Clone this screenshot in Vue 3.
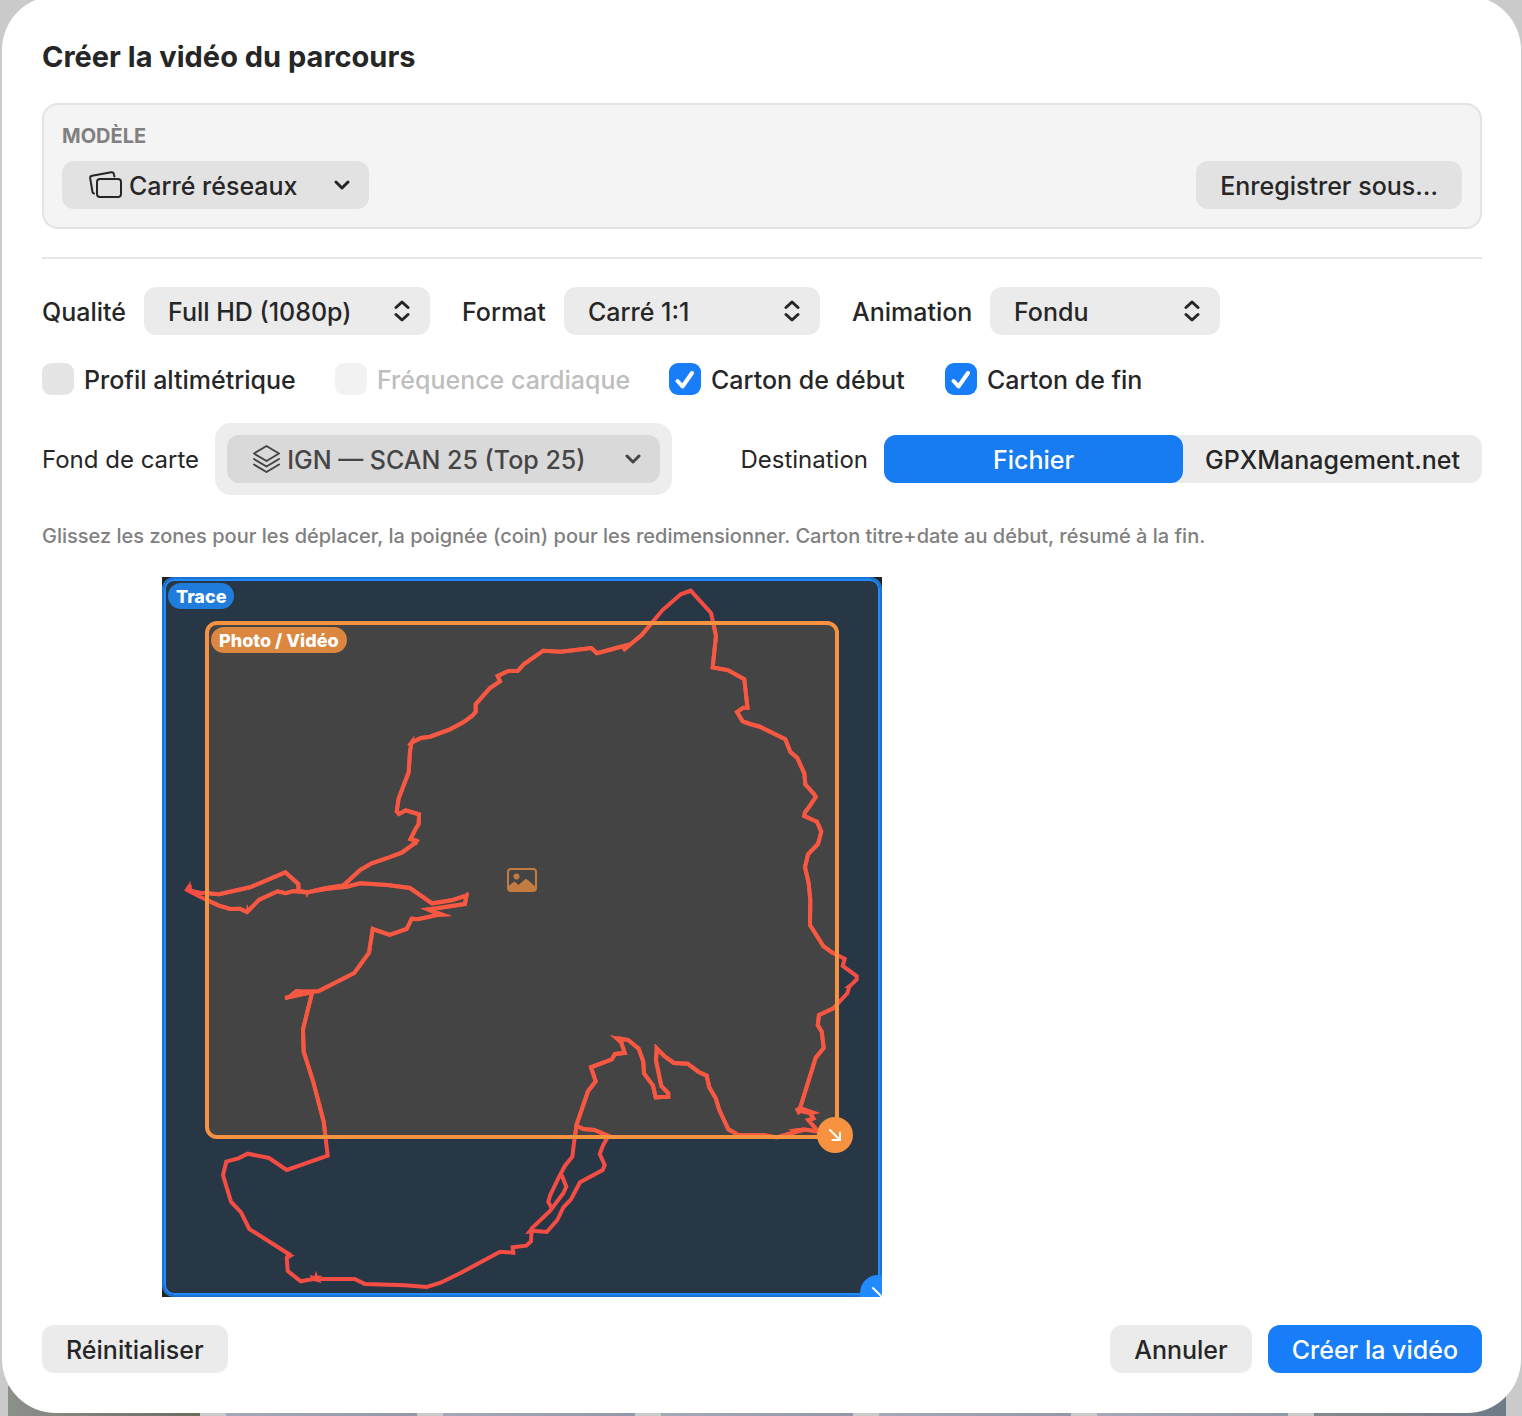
<script setup>
import { ref } from 'vue'

const model = ref('Carré réseaux')
const quality = ref('Full HD (1080p)')
const format = ref('Carré 1:1')
const animation = ref('Fondu')
const baseMap = ref('IGN — SCAN 25 (Top 25)')
const destination = ref('file')

const options = ref([
  { id: 'profile', label: 'Profil altimétrique', checked: false, disabled: false },
  { id: 'heart', label: 'Fréquence cardiaque', checked: false, disabled: true },
  { id: 'intro', label: 'Carton de début', checked: true, disabled: false },
  { id: 'outro', label: 'Carton de fin', checked: true, disabled: false },
])

const destinations = [
  { id: 'file', label: 'Fichier' },
  { id: 'site', label: 'GPXManagement.net' },
]
</script>

<template>
  <div class="backdrop">
    <div class="thumbs" aria-hidden="true">
      <span v-for="n in 7" :key="n" class="thumb"></span>
    </div>

    <main class="dialog" role="dialog" aria-labelledby="dialog-title">
      <h1 id="dialog-title">Créer la vidéo du parcours</h1>

      <section class="panel">
        <label class="caption" for="model">MODÈLE</label>
        <div class="panel-row">
          <div class="picker picker-model">
            <svg class="lead" width="34" height="28" viewBox="0 0 34 28" fill="none" stroke="#262626" stroke-width="2" stroke-linejoin="round" stroke-linecap="round">
              <rect x="8" y="8" width="24" height="18" rx="3" />
              <path d="M5 22.500C4.300 22.400 3.700 21.900 3.500 21L1.200 7.400C1 6 1.700 4.900 3.100 4.700L22.200 1.300C23.600 1.100 24.700 1.900 24.900 3.200L25.400 5.500" />
            </svg>
            <select id="model" v-model="model"><option>Carré réseaux</option></select>
            <svg class="chevron" width="16" height="10" viewBox="0 0 16 10"><path d="M2 2l6 6 6-6" /></svg>
          </div>
          <button type="button" class="button">Enregistrer sous…</button>
        </div>
      </section>

      <hr />

      <div class="fields">
        <div class="field">
          <label for="quality">Qualité</label>
          <div class="picker">
            <select id="quality" v-model="quality"><option>Full HD (1080p)</option></select>
            <svg class="updown" width="16" height="22" viewBox="0 0 16 22"><path d="M2 7.500l6-5.500 6 5.500M2 14.500l6 5.500 6-5.500" /></svg>
          </div>
        </div>
        <div class="field field-format">
          <label for="format">Format</label>
          <div class="picker">
            <select id="format" v-model="format"><option>Carré 1:1</option></select>
            <svg class="updown" width="16" height="22" viewBox="0 0 16 22"><path d="M2 7.500l6-5.500 6 5.500M2 14.500l6 5.500 6-5.500" /></svg>
          </div>
        </div>
        <div class="field field-animation">
          <label for="animation">Animation</label>
          <div class="picker">
            <select id="animation" v-model="animation"><option>Fondu</option></select>
            <svg class="updown" width="16" height="22" viewBox="0 0 16 22"><path d="M2 7.500l6-5.500 6 5.500M2 14.500l6 5.500 6-5.500" /></svg>
          </div>
        </div>
      </div>

      <div class="checks">
        <label v-for="o in options" :key="o.id" class="check" :class="{ disabled: o.disabled }">
          <span class="box">
            <input v-model="o.checked" type="checkbox" :disabled="o.disabled" />
            <svg v-if="o.checked" class="tick" width="32" height="32" viewBox="0 0 32 32"><path d="M8.500 18L13.500 23.500L23 10" /></svg>
          </span>
          <span class="check-text">{{ o.label }}</span>
        </label>
      </div>

      <div class="target">
        <div class="group">
          <label for="base-map">Fond de carte</label>
          <div class="halo">
            <div class="picker picker-map">
              <svg class="lead" width="28" height="28" viewBox="0 0 28 28" fill="none" stroke="#454545" stroke-width="2" stroke-linejoin="round" stroke-linecap="round">
                <path d="M13 1L25.500 8.500L13 16L.500 8.500Z" transform="translate(.5 0)" />
                <path d="M1 14L13.500 21.500L26 14M1 19.500L13.500 27L26 19.500" />
              </svg>
              <select id="base-map" v-model="baseMap"><option>IGN — SCAN 25 (Top 25)</option></select>
              <svg class="chevron" width="16" height="10" viewBox="0 0 16 10"><path d="M2 2l6 6 6-6" /></svg>
            </div>
          </div>
        </div>
        <div class="group">
          <span id="destination-label" class="group-label">Destination</span>
          <div class="segmented" role="group" aria-labelledby="destination-label">
            <button
              v-for="d in destinations"
              :key="d.id"
              type="button"
              :class="{ active: destination === d.id }"
              :aria-pressed="destination === d.id"
              @click="destination = d.id"
            >{{ d.label }}</button>
          </div>
        </div>
      </div>

      <p class="hint">Glissez les zones pour les déplacer, la poignée (coin) pour les redimensionner. Carton titre+date au début, résumé à la fin.</p>

      <div class="preview">
        <div class="canvas">
          <div class="fill fill-trace"></div>
          <div class="fill fill-photo"></div>
          <svg class="track" viewBox="162 577 720 720" fill="none" stroke-width="4">
            <defs>
              <clipPath id="over-photo"><rect x="207" y="623" width="630" height="514" /></clipPath>
              <g id="route">
                <path d="M690.700 590.700L680.700 594.300L662.300 610.300L641.700 635L632.300 642.700L623 650.500L630 644.500L620 647L597 653.300L591.300 648L561 651.700L543.300 650.700L524 664L517.700 671L508.300 671L497.700 676L500 681.300L490 688L475.700 704.300V711.700L472.300 715.700L463.300 722.300L450 729.300L430 736.700L421 738L413.300 741.700L409 746L411.300 743L410 751.700L408.700 772.300L398.700 798.300L396.700 811.300L399 814L405.700 810.300L419 814.300L418.700 824L415 830L410.500 839L416.500 841L415 843L401.700 852.700L388.300 857.700L371.700 863.300L360 870L343.300 885.500L325 888.300L307 892.500L298.500 890.700L298.300 884L285.300 872.300L250 887.300L219 894.300L200 892.700L188.300 890.300L190 885L187 890L200 896.700L218.300 905.300L230 909L240 908.700L247 912L259.300 899.700L277.700 891.300L285.300 893.300L293.300 891L306.700 892.500L325 889L346.700 886.700L360 883.300L387.300 885L410 888L432 903.300L451.700 900.300L466.500 895.500L465 904L446.700 906.700L428 909.500L440 914.500L417.700 919.300L411.700 918.700L406.700 929L389.700 935L372.700 929L369 952.700L354.300 973L318.300 991.300L298 991.700L303 994L285 998L312.300 992L303 1029.300L303.700 1051.700L313.300 1082L323.700 1121.700L327.700 1155.700L286.700 1170L269 1158L247.700 1153.700L238.300 1158.300L226.300 1161.700L223 1175.300L231 1201.700L241 1212.300L249.300 1229L289.500 1254.500L286.700 1257.700L287.700 1271L300.700 1281.300L313.300 1279H354.700L365 1284L405 1285.300L426.700 1287L440 1283L460 1273.300L500 1251.700L513.300 1252.700L512.700 1247.300L526.300 1245.700L531 1241.300L531.700 1228.300L550 1211L563.300 1193.300L566.300 1186.700L561.700 1175" />
                <path d="M551.700 1208.300L548.300 1201.700L550 1195.700L558.300 1178.300L565 1165.700L572.300 1156.700L574.300 1140.700L576.700 1124.300L583.300 1105L588 1091.300L595.700 1081.300L591 1067.300L611.700 1059.300L615 1054L624.700 1053L620 1038.500L628.300 1040L638.700 1048.700L643.300 1061.700L644 1073.300L653 1085.700L655.700 1097.300L668.300 1096.700V1093.300L661.300 1086L656 1060.700L656.700 1048.300L665 1056.700L674 1063L687.700 1063.700L698.300 1071.700L706.700 1075.700L709.300 1087.300L716 1098.700L719 1109.300L728.300 1129.300L738.300 1135H763.300L776.700 1137.500L798 1131.300L805 1129.500L818.300 1131.700L808.300 1120L813.300 1118.300L810 1113L799.500 1110L815.700 1057.700L823.700 1048L821.700 1031.700L817.700 1025L819 1015L833.300 1008.300L847.300 993.300L849.300 986.700L856.700 979.300V976L842.700 966L844.700 958.700L831.700 952.300L823.300 946L810 925L810.300 900L808.700 883.300L805 867.300L808 854.300L818 844L821.300 831.700L817 821.700L804.300 816L805 812.300L810 805.700L815.700 797L814.300 794.300L805.300 784.300L804.300 773.300L797.300 758L790.300 751.700L785.300 739.300L760 726.700L750 724L742.700 721.300L737 712L743.300 707.700H747.500L744.300 679.300L728.300 670.300L712.700 667.300L716 635.700L711 613L690.700 590.700L686 592.500" />
                <path d="M577 1126L583.300 1129L594.300 1130L608.300 1135.700L602.700 1146L599.700 1154L604.700 1165L602.700 1170L580 1182.300L571 1199.300L563.300 1207.300L557.300 1220L546.700 1232L530 1230.500" />
                <path d="M190 880l1.500 7 2 5-9-2 4-3zM247 904l2 6-3 4-3-5 3.500 0zM305 890h5l-3 8zM421 908.500l11-1.500-2 5zM438 911l14 5-14 1zM610 1035l12 3-3 5zM525 1234l6-7 3 6zM795 1109l5-3 20 7-9 2-10-2-3 2zM788 1129.500l16-2v4h-10zM316 1270.500l1.500 5 5 .500-3 3 2 4-8-2-4-6 5 1zM844 988l5-4 1 4zM416.500 838l1 7-6-2zM466 893l1.500-1v10zM285 1254l10 1-6 4zM296 989l14 2-10 4-14 2zM654.500 1044l3 4-2 4zM409 745l4-5v4z" fill="currentColor" stroke="none" />
              </g>
            </defs>
            <use href="#route" stroke="#f54c43" color="#f54c43" />
            <use href="#route" stroke="#f65842" color="#f65842" clip-path="url(#over-photo)" />
          </svg>

          <div class="zone zone-trace">
            <span class="tag">Trace</span>
            <button type="button" class="handle" aria-label="Redimensionner la trace">
              <svg width="14" height="14" viewBox="0 0 14 14"><path d="M2 2l10 10M12 4.500V12H4.500" /></svg>
            </button>
          </div>
          <div class="zone zone-photo">
            <span class="tag">Photo / Vidéo</span>
            <svg class="picture" width="30" height="24" viewBox="0 0 30 24">
              <rect x="1" y="1" width="28" height="22" rx="3" fill="none" stroke="#c27b40" stroke-width="2" />
              <circle cx="9.500" cy="8.500" r="3" fill="#c27b40" />
              <path d="M1 18.500L6.500 14Q7.500 13.300 8.500 14.200L11.500 17L17.500 11.700Q19 10.500 20.500 11.700L29 19V21Q29 23 26 23H4Q1 23 1 21Z" fill="#c27b40" />
            </svg>
            <button type="button" class="handle" aria-label="Redimensionner la photo">
              <svg width="14" height="14" viewBox="0 0 14 14"><path d="M2 2l10 10M12 4.500V12H4.500" /></svg>
            </button>
          </div>
        </div>
      </div>

      <footer class="actions">
        <button type="button" class="button">Réinitialiser</button>
        <span class="spacer"></span>
        <button type="button" class="button">Annuler</button>
        <button type="button" class="button primary">Créer la vidéo</button>
      </footer>
    </main>
  </div>
</template>

<style>
body {
  margin: 0;
  background: #cacaca;
}
</style>

<style scoped>
* {
  box-sizing: border-box;
}

.backdrop {
  position: relative;
  overflow: hidden;
  padding: 0 1px 3px 2px;
  color: #262626;
  font-family: Inter, "Liberation Sans", sans-serif;
  font-size: 25px;
  font-weight: 450;
  line-height: 32px;
}

.backdrop button,
.backdrop select {
  font: inherit;
  color: inherit;
  border: 0;
  margin: 0;
}

.thumbs {
  position: absolute;
  right: 16px;
  bottom: 0;
  left: 8px;
  display: flex;
  gap: 26px;
}

.thumb {
  flex: 1;
  height: 30px;
  background: linear-gradient(90deg, #a3a9b5, #9299a6);
}

.thumb:first-child {
  background: linear-gradient(90deg, #8c908b, #6c6c60);
}

.thumb:last-child {
  background: linear-gradient(90deg, #84898c, #707b88);
}

.dialog {
  position: relative;
  display: flex;
  flex-direction: column;
  margin-top: -4px;
  padding: 45px 39px 40px 40px;
  border-radius: 54px;
  background: #fff;
}

h1 {
  margin: 0 0 30px;
  font-size: 29px;
  font-weight: 700;
  line-height: 32px;
}

.panel {
  padding: 15px 18px 18px;
  border: 2px solid #e3e3e3;
  border-radius: 16px;
  background: #f4f4f4;
}

.caption {
  display: block;
  margin-bottom: 9px;
  color: #808080;
  font-size: 20px;
  font-weight: 650;
  line-height: 32px;
}

.panel-row {
  display: flex;
  justify-content: space-between;
}

.button {
  height: 48px;
  padding: 2px 24px 0;
  border-radius: 12px;
  background: #ebebeb;
}

.panel .button {
  background: #e2e2e2;
}

.backdrop .primary {
  background: #177df8;
  color: #fff;
}

.picker {
  position: relative;
}

.picker select {
  display: block;
  width: 100%;
  height: 48px;
  padding: 2px 48px 0 24px;
  border-radius: 12px;
  background: #ebebeb;
  appearance: none;
}

.picker svg {
  position: absolute;
  top: 50%;
  transform: translateY(-50%);
  pointer-events: none;
}

.lead {
  left: 26px;
}

.chevron {
  right: 19px;
}

.updown {
  right: 20px;
}

.chevron path,
.updown path,
.handle path {
  fill: none;
  stroke: currentColor;
  stroke-width: 3;
  stroke-linecap: round;
  stroke-linejoin: round;
}

.picker-model {
  width: 307px;
}

.picker-model .lead {
  left: 27px;
}

.backdrop .picker-model select {
  padding-left: 67px;
  background: #e2e2e2;
}

hr {
  width: 100%;
  height: 2px;
  margin: 28px 0;
  border: 0;
  background: #e5e5e5;
}

.fields {
  display: flex;
  gap: 32px;
  white-space: nowrap;
}

.field {
  display: grid;
  grid-template-columns: 86px 286px;
  column-gap: 16px;
  align-items: center;
}

.field-format {
  grid-template-columns: 86px 256px;
}

.field-animation {
  grid-template-columns: 122px 230px;
}

.field label,
.group label,
.group-label,
.check-text {
  padding-top: 2px;
}

.checks {
  display: grid;
  grid-template-columns: 293px 334px 276px auto;
  margin-top: 28px;
}

.check {
  display: flex;
  align-items: center;
  gap: 10px;
  height: 32px;
  white-space: nowrap;
}

.disabled {
  color: #bebebe;
}

.box {
  position: relative;
  width: 32px;
  height: 32px;
}

.box input {
  display: block;
  width: 32px;
  height: 32px;
  margin: 0;
  border-radius: 9px;
  background: #e5e5e5;
  appearance: none;
}

.box input:disabled {
  background: #f2f2f2;
}

.box input:checked {
  background: #177df8;
}

.tick {
  position: absolute;
  inset: 0;
  pointer-events: none;
}

.tick path {
  fill: none;
  stroke: #fff;
  stroke-width: 4;
  stroke-linecap: round;
  stroke-linejoin: round;
}

.target {
  display: flex;
  justify-content: space-between;
  margin-top: 28px;
  font-size: 24px;
}

.group {
  display: flex;
  align-items: center;
  gap: 16px;
  font-weight: 400;
  white-space: nowrap;
}

.halo {
  padding: 12px;
  border-radius: 16px;
  background: #ededed;
}

.picker-map {
  width: 433px;
  color: #454545;
  font-size: 25px;
  font-weight: 450;
}

.backdrop .picker-map select {
  padding-left: 60px;
  background: #d9d9d9;
}

.segmented {
  display: grid;
  grid-template-columns: 299px 299px;
  border-radius: 12px;
  background: #ebebeb;
  font-size: 25px;
  font-weight: 450;
}

.segmented button {
  height: 48px;
  padding: 2px 0 0;
  border-radius: 12px;
  background: none;
}

.backdrop .segmented .active {
  background: #177bf2;
  color: #fff;
}

.hint {
  margin: 25px 0;
  color: #808080;
  font-size: 20px;
}

.preview {
  display: flex;
  justify-content: center;
  max-width: 960px;
}

.canvas {
  position: relative;
  flex: none;
  width: 720px;
  height: 720px;
  overflow: hidden;
  background: #222;
}

.fill,
.zone {
  position: absolute;
  border-radius: 12px;
}

.fill-trace,
.zone-trace {
  inset: 0;
}

.fill-trace {
  background: #283746;
}

.fill-photo,
.zone-photo {
  inset: 44px 43px 158px;
}

.fill-photo {
  background: #444;
}

.track {
  position: absolute;
  inset: 0;
}

.zone-trace {
  border: 2px solid #1c73ce;
  box-shadow: inset 0 0 0 2px #218aff;
}

.zone-photo {
  border: 4px solid #f79240;
}

.tag {
  position: absolute;
  top: 2px;
  left: 2px;
  height: 26px;
  padding: 1px 8px 0;
  border-radius: 13px;
  background: #db8740;
  color: #fff;
  font-size: 18px;
  font-weight: 800;
  line-height: 26px;
  white-space: nowrap;
}

.zone-trace .tag {
  top: 4px;
  left: 4px;
  background: #217ddc;
}

.handle {
  position: absolute;
  right: -18px;
  bottom: -18px;
  display: grid;
  place-items: center;
  width: 36px;
  height: 36px;
  padding: 0;
  border-radius: 50%;
  background: #f79240;
}

.handle path {
  stroke-width: 2;
}

.backdrop .handle {
  color: #fff;
}

.zone-trace .handle {
  right: -16px;
  bottom: -16px;
  background: #218aff;
}

.picture {
  position: absolute;
  top: 243px;
  left: 50%;
  margin-left: -15px;
}

.actions {
  display: flex;
  gap: 16px;
  margin-top: 28px;
}

.spacer {
  flex: 1;
}
</style>
